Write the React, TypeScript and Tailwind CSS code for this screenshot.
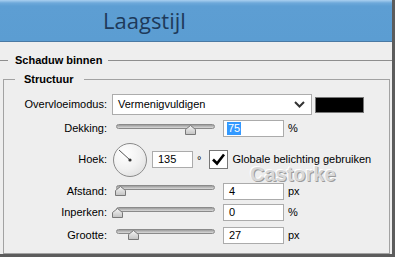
import { useId } from "react";

function Slider({ left, className = "" }: { left: number; className?: string }) {
  const id = useId();
  return (
    <div className={`relative w-[99px] h-[12px] ml-[9px] ${className}`}>
      <div className="h-[5px] rounded-full border border-[#8a8a8a] bg-[linear-gradient(#9c9c9c,#dadada)]" />
      <svg className="absolute top-[1px]" style={{ left }} width="11" height="10" viewBox="0 0 11 10">
        <defs>
          <linearGradient id={id} x1="0" y1="0" x2="0" y2="1">
            <stop offset="0" stopColor="#f6f6f6" />
            <stop offset="1" stopColor="#c2c2c2" />
          </linearGradient>
        </defs>
        <polygon points="5.5,0.5 10.5,4.5 10.5,9.5 0.5,9.5 0.5,4.5" fill={`url(#${id})`} stroke="#787878" />
      </svg>
    </div>
  );
}

function NumBox({ children, w = "w-[61px]", ml = "ml-[8px]" }: { children: React.ReactNode; w?: string; ml?: string }) {
  return (
    <div className={`${w} ${ml} h-[17px] bg-white border border-[#ababab] pl-[5px] flex items-center leading-none`}>
      {children}
    </div>
  );
}

export default function App() {
  return (
    <div className="relative w-[395px] h-[257px] overflow-hidden flex flex-col bg-[#eeeeee] border-r-[3px] border-b-[3px] border-[#5c5c5c] font-['Liberation_Sans',Arial,sans-serif] text-[11px] text-black">
      {/* title bar */}
      <header className="h-[42px] shrink-0 flex items-center pl-[103px] pb-[1px] border-b border-[#4a79a3] bg-[linear-gradient(#aad0f0_0px,#6ea9da_3px,#5d9ed3_6px,#5b9dd2_100%)]">
        <span className="font-['Open_Sans',sans-serif] text-[22px] leading-none text-[#1e3a5a]">Laagstijl</span>
      </header>

      {/* Schaduw binnen */}
      <div className="mt-[11px] h-[14px] flex items-center">
        <div className="w-[8px] h-px bg-[#8e8e8e]" />
        <span className="ml-[7px] font-bold">Schaduw binnen</span>
        <div className="flex-1 h-px ml-[6px] bg-[#8e8e8e]" />
      </div>

      {/* Structuur */}
      <fieldset className="flex-1 ml-[3px] mr-[2px] mt-[6px] border border-[#a2a2a2]">
        <legend className="ml-[11px] pl-[9px] pr-[10px] font-bold leading-[13px]">Structuur</legend>
        <div className="pt-[7px]">
          <div className="h-[23px] flex items-center">
            <div className="w-[103px] text-right">Overvloeimodus:</div>
            <div className="ml-[5px] w-[200px] h-[21px] bg-white border border-[#acacac] flex items-center justify-between pl-[5px]">
              <span>Vermenigvuldigen</span>
              <svg className="mr-[6px]" width="11" height="7" viewBox="0 0 11 7">
                <polyline points="1,1 5.5,5.5 10,1" fill="none" stroke="#333" strokeWidth="2" />
              </svg>
            </div>
            <div className="ml-[3px] w-[49px] h-[16px] bg-black border border-[#777]" />
          </div>

          <div className="h-[25px] flex items-center">
            <div className="w-[103px] text-right">Dekking:</div>
            <Slider left={69} className="mt-[2px]" />
            <div className="w-[61px] ml-[8px] h-[17px] bg-white border border-[#ababab] pl-[3px] flex items-center">
              <span className="bg-[#3399ff] text-white px-[1px] leading-[13px]">75</span>
            </div>
            <span className="ml-[4px]">%</span>
          </div>

          <div className="h-[37px] flex items-center">
            <div className="w-[103px] text-right">Hoek:</div>
            <div className="ml-[6px] w-[34px] h-[34px] rounded-full border border-[#8a8a8a] bg-[radial-gradient(circle_at_35%_30%,#ffffff,#f1f1f1_50%,#d9d9d9)]">
              <svg width="32" height="32" viewBox="0 0 32 32">
                <line x1="16" y1="16" x2="5" y2="6" stroke="#555" strokeWidth="1" />
                <circle cx="16" cy="16" r="1.6" fill="#333" />
              </svg>
            </div>
            <NumBox w="w-[41px]" ml="ml-[5px]">135</NumBox>
            <span className="ml-[4px] self-start mt-[11px]">°</span>
            <div className="ml-[8px] w-[19px] h-[19px] bg-white border border-[#777] flex items-center justify-center">
              <svg width="15" height="13" viewBox="0 0 15 13">
                <polyline points="2,6.5 6,10.5 13,1.5" fill="none" stroke="#000" strokeWidth="2.6" />
              </svg>
            </div>
            <span className="ml-[4px]">Globale belichting gebruiken</span>
          </div>

          <div className="h-[26px] flex items-center">
            <div className="w-[103px] text-right">Afstand:</div>
            <Slider left={-1} />
            <NumBox>4</NumBox>
            <span className="ml-[4px]">px</span>
          </div>

          <div className="h-[17px] flex items-center">
            <div className="w-[103px] text-right">Inperken:</div>
            <Slider left={-4} />
            <NumBox>0</NumBox>
            <span className="ml-[4px]">%</span>
          </div>

          <div className="h-[28px] flex items-center">
            <div className="w-[103px] text-right">Grootte:</div>
            <Slider left={12} />
            <NumBox>27</NumBox>
            <span className="ml-[4px]">px</span>
          </div>
        </div>
      </fieldset>

      {/* watermark */}
      <div className="absolute left-[250px] top-[165px] font-['Liberation_Sans_Narrow','Liberation_Sans',sans-serif] font-bold text-[20px] leading-[18px] text-[#d8d8d8] [text-shadow:1px_1px_0_#9c9c9c,-1px_-1px_0_#ffffff] pointer-events-none">
        Castorke
      </div>
    </div>
  );
}
